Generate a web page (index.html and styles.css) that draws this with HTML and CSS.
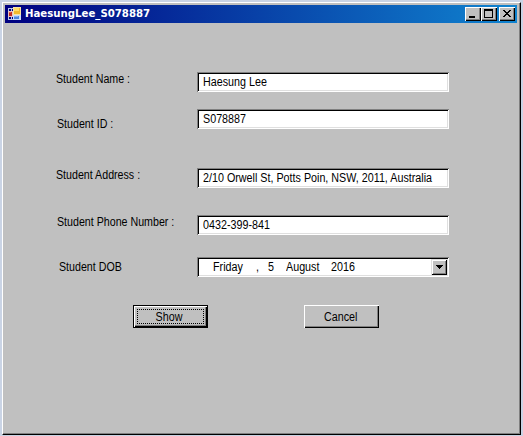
FILE: index.html
```html
<!DOCTYPE html>
<html lang="en">
<head>
<meta charset="utf-8">
<title>HaesungLee_S078887</title>
<link rel="stylesheet" href="styles.css">
</head>
<body>
<main class="window">
  <header class="titlebar">
    <svg class="app-icon" width="14" height="14" viewBox="0 0 14 14" shape-rendering="crispEdges">
      <path d="M0 1h5v1H0zM0 1h1v4H0zM3 1h1v4H3zM0 10h1v3H0zM3 10h1v3H3zM0 12h5v1H0z" fill="#b9c4e6"/>
      <path d="M0 4h5v6H0z" fill="#e8c4c0"/><path d="M1 5h3v4H1z" fill="#c02c22"/><path d="M1 5h2v1H1z" fill="#e0604c"/>
      <path d="M5 0h8v8H5z" fill="#f6e3a5"/><path d="M6 1h6v6H6z" fill="#f2b92e"/><path d="M6 1h5v3H6z" fill="#ffdc68"/>
      <path d="M5 8h8v5H5z" fill="#c9dcfa"/><path d="M6 9h5v3H6z" fill="#4f86df"/><path d="M6 9h4v1H6z" fill="#82b2f5"/>
    </svg>
    <h1><span class="title-text">HaesungLee_S078887</span></h1>
    <div class="controls">
      <button class="control" aria-label="Minimize"><svg width="16" height="14" shape-rendering="crispEdges"><path d="M4 9h6v2H4z"/></svg></button>
      <button class="control" aria-label="Maximize"><svg width="16" height="14" shape-rendering="crispEdges"><path fill-rule="evenodd" d="M3 2h9v9H3zM4 4v6h7V4z"/></svg></button>
      <button class="control close" aria-label="Close"><svg width="16" height="14" shape-rendering="crispEdges"><path d="M4 3h2v1h1v1h2V4h1V3h2v1h-1v1h-1v1H9v1h1v1h1v1h1v1h-2V9H9V8H7v1H6v1H4V9h1V8h1V7h1V6H6V5H5V4H4z"/></svg></button>
    </div>
  </header>
  <form class="form">
    <div class="row name"><label><span class="text">Student Name :</span></label><div class="field"><span class="text">Haesung Lee</span></div></div>
    <div class="row id"><label><span class="text">Student ID :</span></label><div class="field"><span class="text">S078887</span></div></div>
    <div class="row address"><label><span class="text">Student Address :</span></label><div class="field"><span class="text">2/10 Orwell St, Potts Poin, NSW, 2011, Australia</span></div></div>
    <div class="row phone"><label><span class="text">Student Phone Number :</span></label><div class="field"><span class="text">0432-399-841</span></div></div>
    <div class="row dob"><label><span class="text">Student DOB</span></label>
      <div class="field date">
        <span class="part weekday"><span class="text">Friday</span></span><span class="part comma"><span class="text">,</span></span><span class="part day"><span class="text">5</span></span><span class="part month"><span class="text">August</span></span><span class="part year"><span class="text">2016</span></span>
        <span class="drop"><svg width="7" height="4" shape-rendering="crispEdges"><path d="M0 0h7v1H6v1H5v1H4v1H3V3H2V2H1V1H0z"/></svg></span>
      </div>
    </div>
    <div class="actions">
      <button type="button" class="button default"><span class="focus"><span class="text">Show</span></span></button>
      <button type="button" class="button"><span class="text">Cancel</span></button>
    </div>
  </form>
</main>
</body>
</html>
```
FILE: styles.css
```css
* { box-sizing: border-box; }
body {
  margin: 0;
  width: 523px;
  height: 436px;
  padding: 2px 2px 1px;
  background: #cad4e5;
  font: 12px/14px "Liberation Sans", Arial, sans-serif;
  color: #000;
  overflow: hidden;
}
.window {
  width: 519px;
  height: 433px;
  padding: 2px 2px 0;
  background: #c0c0c0;
  border: 1px solid;
  border-color: #fff #000 #000 #fff;
  box-shadow: inset -1px -1px #808080;
}
.titlebar {
  display: flex;
  align-items: center;
  width: 512px;
  height: 18px;
  padding: 0 2px 0 3px;
  background: linear-gradient(90deg, #000080, #1084d0);
}
h1 {
  flex: 1;
  margin: 0 0 0 3px;
  font: bold 11px/16px "DejaVu Sans", sans-serif;
  color: #fff;
  white-space: nowrap;
}
.title-text { display: inline-block; transform: scaleX(.924); transform-origin: left; }
.controls { display: flex; }
.control {
  display: block;
  width: 16px;
  height: 14px;
  padding: 0;
  border: 0;
  background: #c0c0c0;
  box-shadow: inset 1px 1px #fff, inset -1px -1px #000, inset -2px -2px #808080;
}
.control svg { display: block; }
.close { margin-left: 2px; }
.form { padding-top: 49px; }
.row { display: flex; height: 20px; }
label { width: 141px; margin-left: 51px; padding-right: 1px; }
.text {
  display: inline-block;
  white-space: pre;
  transform: scaleX(.895);
  transform-origin: left;
}
label .text { transform: scaleX(.888); }
.id { margin-top: 17px; }
.id label { margin-left: 52px; width: 140px; padding-top: 8px; }
.address { margin-top: 39px; }
.phone { margin-top: 27px; }
.phone label { margin-left: 52px; width: 140px; }
.dob { margin-top: 22px; }
.dob label { margin-left: 54px; width: 138px; padding-top: 3px; }
.field {
  width: 252px;
  height: 20px;
  padding: 3px 6px;
  background: #fff;
  box-shadow: inset 1px 1px #808080, inset -1px -1px #fff, inset 2px 2px #000, inset -2px -2px #dfdfdf;
}
.date { display: flex; padding: 2px 2px 2px 16px; }
.part { padding-top: 1px; }
.weekday { width: 43px; }
.comma { width: 12px; }
.day { width: 18px; }
.month { width: 45px; }
.drop {
  display: flex;
  align-items: center;
  justify-content: center;
  width: 16px;
  height: 16px;
  margin-left: auto;
  background: #c0c0c0;
  box-shadow: inset 1px 1px #dfdfdf, inset -1px -1px #000, inset 2px 2px #fff, inset -2px -2px #808080;
}
.actions { display: flex; gap: 96px; margin: 28px 0 0 128px; }
.button {
  display: flex;
  align-items: center;
  justify-content: center;
  width: 75px;
  height: 23px;
  padding: 0 2px 0 0;
  border: 0;
  background: #c0c0c0;
  box-shadow: inset 1px 1px #fff, inset -1px -1px #000, inset -2px -2px #808080;
  font: inherit;
  color: #000;
}
.button .text { transform-origin: center; }
.default { padding: 0; border: 1px solid #000; }
.focus {
  display: flex;
  align-items: center;
  justify-content: center;
  width: 67px;
  height: 15px;
  padding-right: 2px;
  border: 1px dotted #000;
}
```
